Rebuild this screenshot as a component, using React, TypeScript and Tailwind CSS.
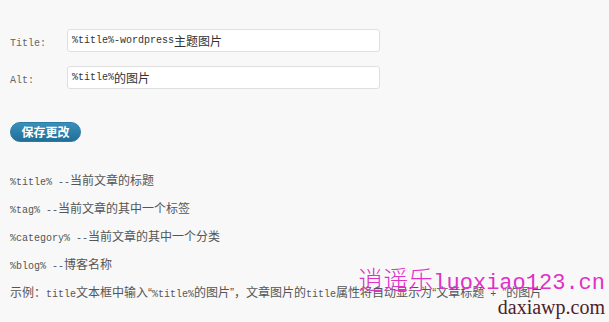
import React from "react";

function Mix({ text }: { text: string }) {
  const parts = text.match(/[\x00-\x7f]+|[\u201c\u201d]+|[^\x00-\x7f\u201c\u201d]+/g) ?? [];
  return (
    <>
      {parts.map((p, i) =>
        /^[\x00-\x7f]/.test(p) ? (
          <span key={i} className="font-['Liberation_Mono',monospace] text-[10px]">
            {p}
          </span>
        ) : /^[\u201c\u201d]/.test(p) ? (
          <span key={i} className="font-['Liberation_Sans',sans-serif] text-[12px]">
            {p}
          </span>
        ) : (
          <span key={i} className="font-['Noto_Sans_CJK_SC',sans-serif] text-[12px]">
            {p}
          </span>
        )
      )}
    </>
  );
}

function Field({ label, value }: { label: string; value: string }) {
  return (
    <div className="flex items-center h-[23px]">
      <div className="w-[57px] text-[#666] leading-none">
        <Mix text={label} />
      </div>
      <div className="w-[313px] h-[23px] bg-white border border-[#dfdfdf] rounded-[3px] flex items-center pl-[4px] text-[#333] leading-none">
        <Mix text={value} />
      </div>
    </div>
  );
}

const notes = [
  "%title% --当前文章的标题",
  "%tag% --当前文章的其中一个标签",
  "%category% --当前文章的其中一个分类",
  "%blog% --博客名称",
  "示例：title文本框中输入“%title%的图片”，文章图片的title属性将自动显示为“文章标题 + ”的图片",
];

export default function App() {
  return (
    <div className="relative w-[609px] h-[322px] overflow-hidden bg-[#f8f8f8]">
      <div className="flex flex-col pl-[10px] pt-[29px]">
        <div className="flex flex-col gap-[14px]">
          <Field label="Title:" value="%title%-wordpress主题图片" />
          <Field label="Alt:" value="%title%的图片" />
        </div>

        <div className="mt-[33px]">
          <button className="w-[71px] h-[20px] rounded-full bg-gradient-to-b from-[#3a8fbb] to-[#1f6f99] border border-[#2a7aa6] text-white font-bold text-[12px] leading-none font-['Noto_Sans_CJK_SC',sans-serif] flex items-center justify-center">
            保存更改
          </button>
        </div>

        <div className="mt-[23px] flex flex-col text-[#555]">
          {notes.map((n, i) => (
            <div key={i} className="h-[28px] flex items-center whitespace-nowrap">
              <span>
                <Mix text={n} />
              </span>
            </div>
          ))}
        </div>
      </div>

      <div className="absolute right-[4px] top-[266px] whitespace-nowrap leading-[25px] text-[#e030c8]">
        <span className="font-['Noto_Sans_CJK_SC',sans-serif] text-[25px] font-light">逍遥乐</span>
        <span className="font-['Liberation_Mono',monospace] text-[22px]">luoxiao123.cn</span>
      </div>
      <div className="absolute right-[4px] top-[297px] whitespace-nowrap leading-[20px] text-[20px] text-[#4d1f2b] font-['Liberation_Serif',serif]">
        daxiawp.com
      </div>
    </div>
  );
}
